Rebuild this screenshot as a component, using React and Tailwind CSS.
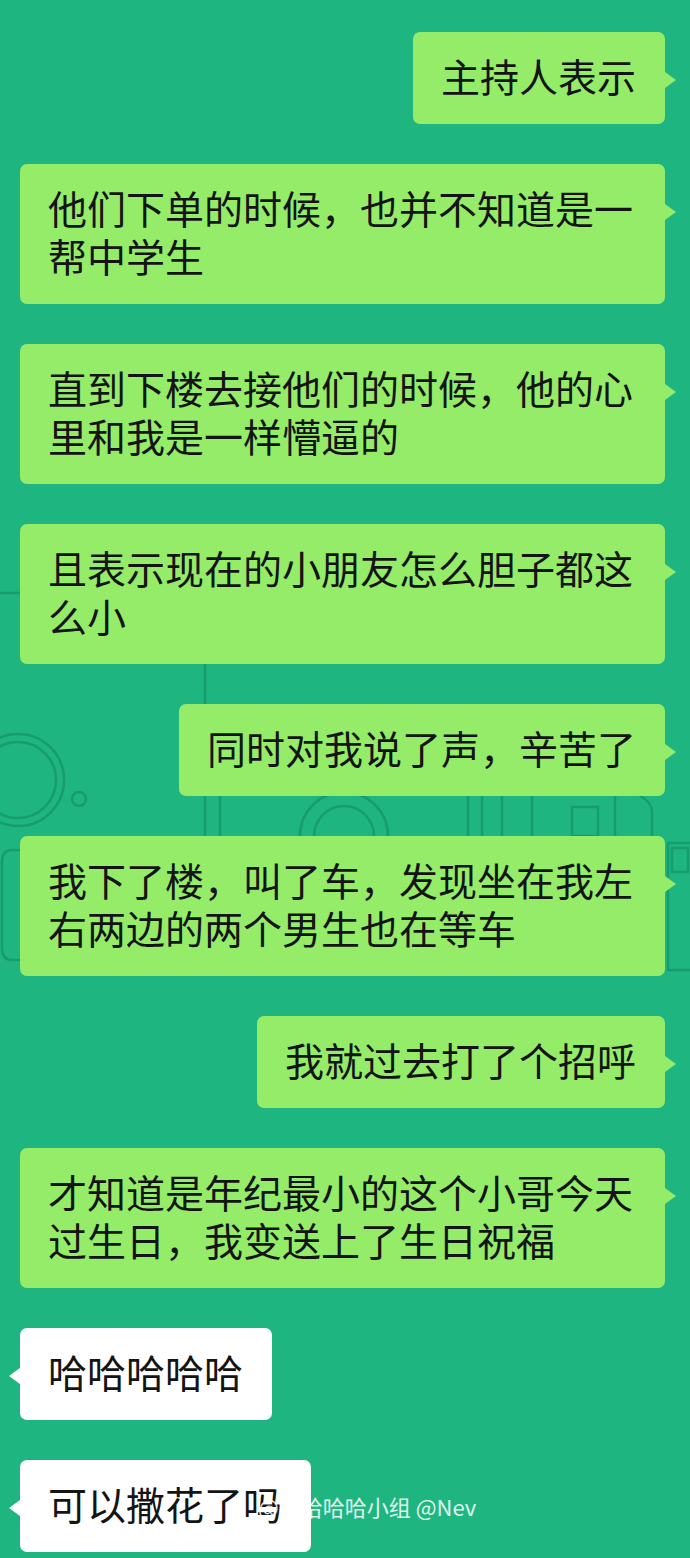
const font = { fontFamily: '"Noto Sans CJK SC", "Noto Sans", sans-serif' }

const messages = [
  { side: 'right', lines: ['主持人表示'] },
  { side: 'right', full: true, lines: ['他们下单的时候，也并不知道是一', '帮中学生'] },
  { side: 'right', full: true, lines: ['直到下楼去接他们的时候，他的心', '里和我是一样懵逼的'] },
  { side: 'right', full: true, lines: ['且表示现在的小朋友怎么胆子都这', '么小'] },
  { side: 'right', lines: ['同时对我说了声，辛苦了'] },
  { side: 'right', full: true, lines: ['我下了楼，叫了车，发现坐在我左', '右两边的两个男生也在等车'] },
  { side: 'right', lines: ['我就过去打了个招呼'] },
  { side: 'right', full: true, lines: ['才知道是年纪最小的这个小哥今天', '过生日，我变送上了生日祝福'] },
  { side: 'left', lines: ['哈哈哈哈哈'] },
  { side: 'left', lines: ['可以撒花了吗'] },
]

function Bubble({ side, full, lines }) {
  const mine = side === 'right'
  return (
    <div className={`relative ${mine ? 'self-end' : 'self-start'} ${full ? 'w-full' : 'w-fit'}`}>
      <div
        className={`rounded-[7px] pl-[28px] pr-[29px] pt-[19px] pb-[25px] text-[39px] leading-[48px] text-[#141414] whitespace-nowrap ${
          mine ? 'bg-[#95ec69]' : 'bg-white'
        }`}
      >
        {lines.map((l, i) => (
          <div key={i}>{l}</div>
        ))}
      </div>
      {/* tail */}
      {mine ? (
        <div className="absolute top-[40px] right-[-11px] w-0 h-0 border-y-[8px] border-y-transparent border-l-[11px] border-l-[#95ec69]" />
      ) : (
        <div className="absolute top-[40px] left-[-11px] w-0 h-0 border-y-[8px] border-y-transparent border-r-[11px] border-r-white" />
      )}
    </div>
  )
}

function Doodles() {
  return (
    <svg className="absolute inset-0 w-full h-full pointer-events-none" width="690" height="1558">
      <g fill="none" stroke="#16966a" strokeWidth="2.5" opacity="0.8">
        <line x1="0" y1="593" x2="20" y2="593" />
        <line x1="205" y1="664" x2="205" y2="704" />
        <line x1="205" y1="796" x2="205" y2="836" />
        <line x1="220" y1="796" x2="220" y2="836" />
        <circle cx="18" cy="780" r="46" />
        <circle cx="18" cy="780" r="38" />
        <circle cx="79" cy="799" r="7" />
        <path d="M20 850 L12 850 Q2 850 2 862 L2 948 Q2 960 12 960 L20 960" />
        <path d="M300 836 A44 44 0 0 1 388 836" />
        <path d="M314 836 A30 30 0 0 1 374 836" />
        <line x1="468" y1="796" x2="468" y2="836" />
        <line x1="482" y1="796" x2="482" y2="836" />
        <line x1="502" y1="796" x2="502" y2="836" />
        <line x1="532" y1="796" x2="532" y2="836" />
        <rect x="572" y="807" width="26" height="29" />
        <line x1="615" y1="796" x2="615" y2="836" />
        <path d="M640 796 Q652 802 652 812 L652 836" />
        <rect x="668" y="843" width="30" height="127" />
        <rect x="672" y="848" width="16" height="24" />
      </g>
    </svg>
  )
}

export default function App() {
  return (
    <div className="relative w-[690px] h-[1558px] overflow-hidden bg-[#1fb581]" style={font}>
      <Doodles />
      <div className="relative flex flex-col gap-[40px] pt-[32px] pl-[20px] pr-[25px]">
        {messages.map((m, i) => (
          <Bubble key={i} {...m} />
        ))}
      </div>

      {/* watermark */}
      <div className="absolute left-[258px] top-[1492px] text-[22px] leading-[28px] text-white/85">
        @哈哈哈哈小组 @Nev
      </div>
    </div>
  )
}
